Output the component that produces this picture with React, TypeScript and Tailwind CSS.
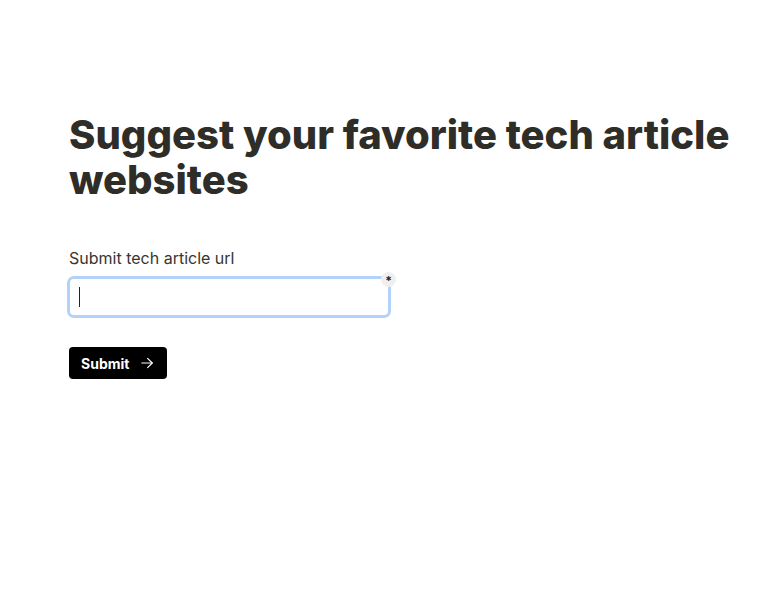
import { useEffect, useRef } from "react";

// Page with a single suggestion form
export default function App() {
  const inputRef = useRef<HTMLInputElement>(null);

  useEffect(() => {
    inputRef.current?.focus();
  }, []);

  return (
    <div className="min-h-screen bg-white font-['Inter',sans-serif] text-[#2e2d28]">
      <div className="pl-[69px] pt-[112px]">
        <h1 className="text-[40px] font-extrabold leading-[45px]">
          Suggest your favorite tech article websites
        </h1>

        <form className="mt-[46px]" onSubmit={(e) => e.preventDefault()}>
          <label className="block text-[16px] leading-[20px] text-[#37362f]">
            Submit tech article url
          </label>
          <div className="relative -ml-[2px] mt-[8px] w-[324px]">
            <input
              ref={inputRef}
              type="url"
              className="h-[42px] w-full rounded-[7px] border-[3px] border-[#b3d2fb] bg-white px-[9px] text-[16px] text-[#2e2d28] caret-transparent outline-none"
            />
            <span className="pointer-events-none absolute left-[12px] top-[11px] h-[20px] w-px bg-[#222]" />
            <span className="absolute -right-[5px] -top-[4px] flex h-[15px] w-[15px] items-center justify-center rounded-full bg-[#efefef] pt-[3px] text-[12px] font-bold leading-none text-[#222]">
              *
            </span>
          </div>

          <button
            type="submit"
            className="mt-[29px] flex h-[32px] items-center gap-[11px] rounded-[4px] bg-black pl-[12px] pr-[13px] text-[14px] font-bold text-white"
          >
            Submit
            <svg width="14" height="14" viewBox="0 0 24 24" fill="none" stroke="currentColor" strokeWidth="2" strokeLinecap="round" strokeLinejoin="round">
              <path d="M3 12h18" />
              <path d="M13 4l8 8-8 8" />
            </svg>
          </button>
        </form>
      </div>
    </div>
  );
}
